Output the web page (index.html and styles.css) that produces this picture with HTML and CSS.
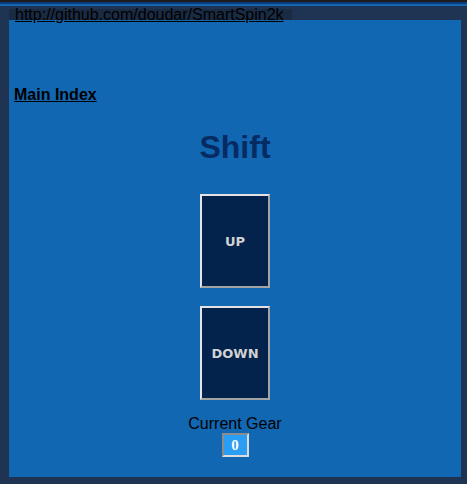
FILE: index.html
```html
<!DOCTYPE html>
<html>
<head>
<meta charset="utf-8">
<link rel="stylesheet" href="styles.css">
<title>SmartSpin2K Web Server</title>
</head>
<body>
<div class="topbar"></div>
<div class="frame">
  <div class="legend"><span class="legend-box"><a class="link" href="http://github.com/doudar/SmartSpin2k">http://github.com/doudar/SmartSpin2k</a></span></div>
  <div class="panel">
    <p class="nav"><strong><a class="link" href="index.html">Main Index</a></strong></p>
    <h1 class="title">Shift</h1>
    <div class="controls">
      <button class="shift-btn">UP</button>
      <button class="shift-btn">DOWN</button>
      <div class="gear-label">Current Gear</div>
      <div class="gear-box">0</div>
    </div>
  </div>
</div>
</body>
</html>
```
FILE: styles.css
```css
html, body {
  margin: 0;
  padding: 0;
  background: #1e3452;
}
body {
  font-family: "Liberation Sans", Arial, sans-serif;
  font-size: 16px;
  color: #000;
}
.topbar {
  height: 2px;
  background: #0b3c7c;
  border-top: 2px solid #1c1c1c;
  border-bottom: 2px solid #1167b1;
}
.frame {
  padding: 0 6px 7px 9px;
}
.legend {
  height: 11px;
  margin-top: 3px;
  line-height: 11px;
}
.legend-box {
  display: inline-block;
  height: 11px;
  padding: 0 8px 0 6px;
  background: #1a2b44;
  vertical-align: top;
}
.link {
  color: #000;
  text-decoration: underline;
}
.panel {
  background: #1167b1;
  height: 457px;
  display: flex;
  flex-direction: column;
}
.nav {
  margin: 66px 0 0 5px;
  line-height: 18px;
}
.title {
  margin: 25px 0 0 0;
  text-align: center;
  font-size: 32px;
  line-height: 37px;
  font-weight: bold;
  color: #062b62;
}
.controls {
  display: flex;
  flex-direction: column;
  align-items: center;
  margin-top: 28px;
}
.shift-btn {
  width: 70px;
  height: 94px;
  background: #03224c;
  color: #d2d2d2;
  font-family: "DejaVu Sans", sans-serif;
  font-weight: bold;
  font-size: 13px;
  border-style: solid;
  border-width: 2px;
  border-color: #e4e4e4 #a4a4a4 #a4a4a4 #e4e4e4;
  padding: 0;
  margin: 0 0 18px 0;
}
.shift-btn + .shift-btn {
  margin-bottom: 15px;
}
.gear-label {
  line-height: 18px;
}
.gear-box {
  box-sizing: border-box;
  width: 27px;
  height: 24px;
  background: #2a9df4;
  color: #fff;
  font-family: "Liberation Serif", "Times New Roman", serif;
  font-weight: bold;
  font-size: 15px;
  line-height: 20px;
  text-align: center;
  border-style: solid;
  border-width: 2px;
  border-color: #8c8c8c #dcdcdc #dcdcdc #8c8c8c;
}
```
